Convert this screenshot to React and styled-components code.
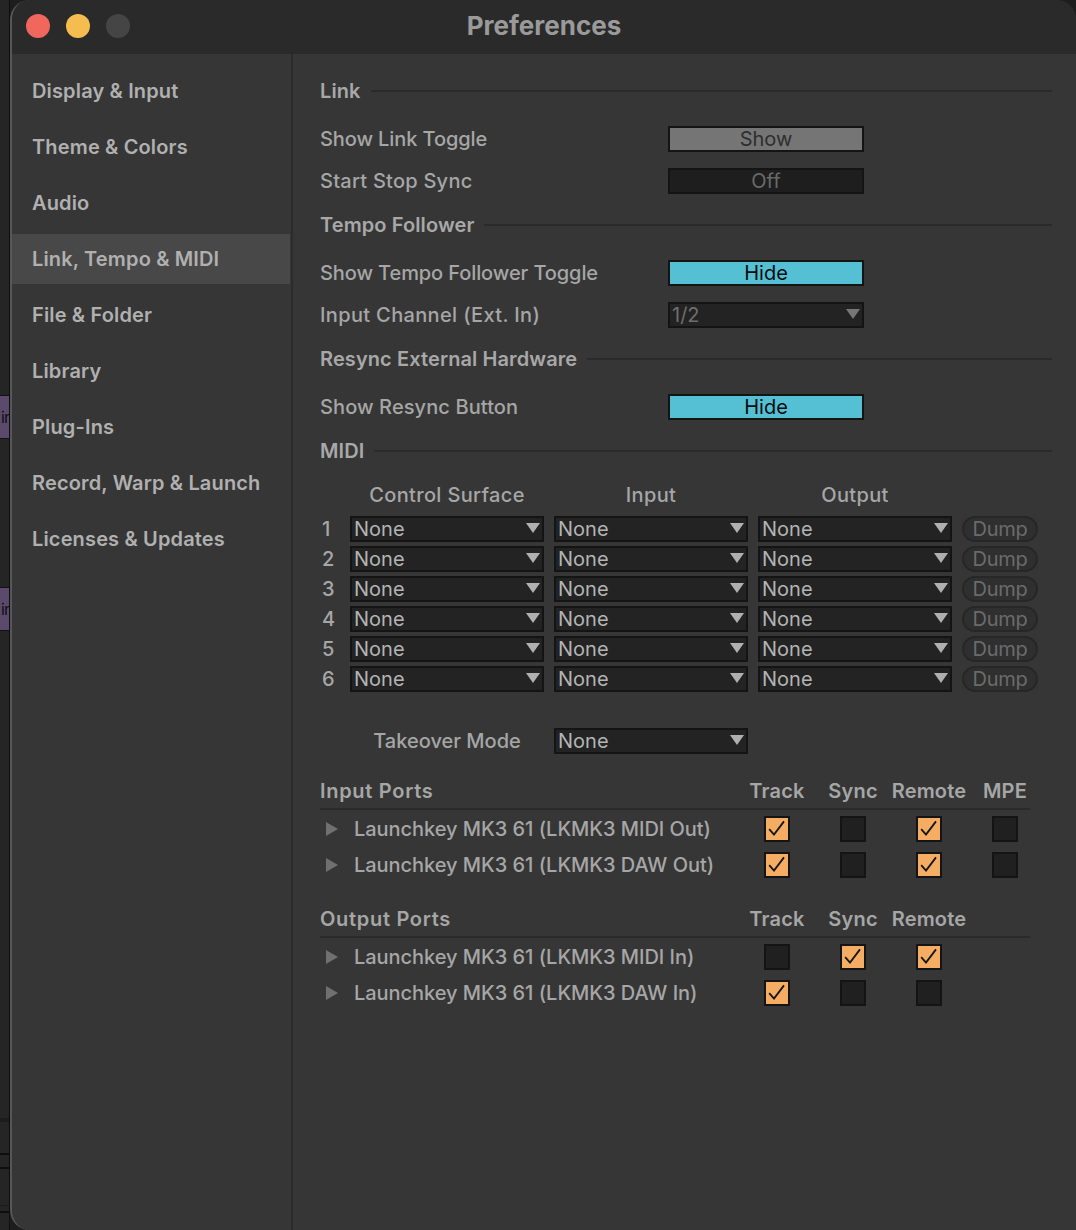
import React from 'react';
import styled, { createGlobalStyle } from 'styled-components';

const GlobalStyle = createGlobalStyle`
  html, body {
    margin: 0;
    height: 100%;
    background: #202020;
  }
  body {
    font-family: Inter, "Noto Sans", "Liberation Sans", sans-serif;
  }
`;

const Screen = styled.div`
  display: flex;
  width: 1076px;
  height: 1230px;
  overflow: hidden;
  background: #1e1e1e;
`;

const BehindStrip = styled.div`
  flex: 0 0 10px;
  height: 100%;
  box-sizing: border-box;
  display: flex;
  flex-direction: column;
  background: #252525;
  border-right: 1px solid #0e0e0e;
`;

const Clip = styled.div`
  flex: 0 0 42px;
  margin-top: ${(p) => p.$top}px;
  background: #5b4a6e;
  border-top: 1px solid #111;
  border-bottom: 1px solid #111;
  color: #111;
  font-size: 16px;
  letter-spacing: -1px;
  line-height: 42px;
  padding-left: 1px;
  overflow: hidden;
`;

const StripLine = styled.div`
  flex: 0 0 ${(p) => p.$h}px;
  margin-top: ${(p) => p.$top}px;
  background: ${(p) => p.$color};
`;

const Window = styled.div`
  flex: 1;
  display: flex;
  flex-direction: column;
  height: 100%;
  box-sizing: border-box;
  border-left: 2px solid #575757;
  border-radius: 20px 20px 0 20px;
  overflow: hidden;
  background: #363636;
`;

const TitleBar = styled.div`
  position: relative;
  flex: 0 0 54px;
  display: flex;
  align-items: center;
  justify-content: center;
  background: #2a2a2a;
`;

const Lights = styled.div`
  position: absolute;
  left: 14px;
  top: 14px;
  display: flex;
  gap: 16px;
`;

const Light = styled.span`
  width: 24px;
  height: 24px;
  border-radius: 50%;
  background: ${(p) => p.$color};
`;

const Title = styled.div`
  color: #9a9a9a;
  font-size: 26px;
  font-weight: 700;
  margin-top: -4px;
`;

const Body = styled.div`
  flex: 1;
  display: flex;
  min-height: 0;
`;

const Sidebar = styled.nav`
  flex: 0 0 278px;
  display: flex;
  flex-direction: column;
  gap: 6px;
  padding-top: 12px;
  box-sizing: border-box;
`;

const NavItem = styled.div`
  height: 50px;
  display: flex;
  align-items: center;
  padding-left: 20px;
  font-size: 20px;
  font-weight: 600;
  letter-spacing: 0.15px;
  color: #b0b0b0;
  background: ${(p) => (p.$active ? '#484848' : 'transparent')};
`;

const Content = styled.main`
  flex: 1;
  border-left: 2px solid #2c2c2c;
  margin-left: 1px;
  padding: 0 24px 0 27px;
  box-sizing: border-box;
`;

const SectionHead = styled.div`
  display: flex;
  align-items: center;
  gap: 10px;
  height: ${(p) => p.$h || 46}px;
  margin-top: ${(p) => p.$top || 0}px;
  font-size: 20px;
  font-weight: 600;
  letter-spacing: 0.1px;
  color: #a8a8a8;
  &::after {
    content: '';
    flex: 1;
    height: 2px;
    background: #2a2a2a;
  }
`;

const SettingRow = styled.div`
  display: grid;
  grid-template-columns: 348px 196px;
  align-items: center;
  height: 42px;
  margin-top: ${(p) => p.$top || 0}px;
  font-size: 20px;
  letter-spacing: ${(p) => p.$track || 0}px;
  color: #a6a6a6;
  font-weight: 500;
`;

const Toggle = styled.div`
  height: 26px;
  box-sizing: border-box;
  border: 2px solid #141414;
  display: flex;
  align-items: center;
  justify-content: center;
  font-size: 20px;
  font-weight: 400;
  letter-spacing: 0;
  background: ${(p) => p.$bg};
  color: ${(p) => p.$fg};
`;

const Select = styled.div`
  height: 26px;
  box-sizing: border-box;
  border: 2px solid #141414;
  background: #232323;
  color: ${(p) => (p.$dim ? '#6e6e6e' : '#b4b4b4')};
  display: flex;
  align-items: center;
  justify-content: space-between;
  padding: 0 2px;
  font-size: 20px;
  font-weight: 400;
  letter-spacing: 0;
`;

const Caret = styled.span`
  width: 0;
  height: 0;
  border-left: 7px solid transparent;
  border-right: 7px solid transparent;
  border-top: 10px solid ${(p) => (p.$dim ? '#777' : '#b0b0b0')};
  margin-top: -2px;
`;

const MidiGrid = styled.div`
  display: grid;
  grid-template-columns: 20px 194px 194px 194px 76px;
  column-gap: 10px;
  align-items: center;
  font-size: 20px;
  color: #a6a6a6;
  font-weight: 500;
`;

const MidiHeader = styled(MidiGrid)`
  height: 38px;
  margin-top: 2px;
`;

const ColumnTitle = styled.span`
  text-align: center;
  letter-spacing: 0.35px;
`;

const MidiRow = styled(MidiGrid)`
  height: 30px;
`;

const RowNum = styled.span`
  padding-left: 2px;
`;

const Dump = styled.div`
  height: 26px;
  box-sizing: border-box;
  border: 2px solid #272727;
  border-radius: 13px;
  background: #2f2f2f;
  color: #6b6b6b;
  display: flex;
  align-items: center;
  justify-content: center;
  font-size: 20px;
  font-weight: 400;
  letter-spacing: -0.3px;
`;

const Takeover = styled(MidiGrid)`
  height: 30px;
  margin-top: 32px;
`;

const TakeoverLabel = styled.span`
  grid-column: 2;
  text-align: center;
`;

const PortGrid = styled.div`
  display: grid;
  grid-template-columns: 419px repeat(4, 76px);
  align-items: center;
  justify-items: center;
  font-size: 20px;
  color: #a6a6a6;
`;

const PortHeader = styled(PortGrid)`
  width: 710px;
  height: 36px;
  margin-top: ${(p) => p.$top}px;
  margin-bottom: 1px;
  border-bottom: 2px solid #2a2a2a;
  box-sizing: border-box;
  font-weight: 600;
  letter-spacing: 0.2px;
`;

const PortTitle = styled.span`
  justify-self: start;
  letter-spacing: 0.7px;
`;

const PortRow = styled(PortGrid)`
  height: 36px;
  font-weight: 500;
  letter-spacing: -0.04px;
`;

const PortName = styled.div`
  justify-self: start;
  display: flex;
  align-items: center;
  gap: 16px;
  padding-left: 6px;
`;

const Disclosure = styled.span`
  width: 0;
  height: 0;
  border-top: 7px solid transparent;
  border-bottom: 7px solid transparent;
  border-left: 12px solid #707070;
`;

const Check = styled.div`
  width: 26px;
  height: 26px;
  box-sizing: border-box;
  border: 2px solid #141414;
  background: ${(p) => (p.$on ? '#f4ad63' : '#202020')};
`;

const CheckMark = styled.svg`
  display: block;
  width: 22px;
  height: 22px;
`;

const ports = {
  input: [
    { name: 'Launchkey MK3 61 (LKMK3 MIDI Out)', flags: [1, 0, 1, 0] },
    { name: 'Launchkey MK3 61 (LKMK3 DAW Out)', flags: [1, 0, 1, 0] }
  ],
  output: [
    { name: 'Launchkey MK3 61 (LKMK3 MIDI In)', flags: [0, 1, 1] },
    { name: 'Launchkey MK3 61 (LKMK3 DAW In)', flags: [1, 0, 0] }
  ]
};

const nav = [
  'Display & Input',
  'Theme & Colors',
  'Audio',
  'Link, Tempo & MIDI',
  'File & Folder',
  'Library',
  'Plug-Ins',
  'Record, Warp & Launch',
  'Licenses & Updates'
];

function CheckBox({ on }) {
  return (
    <Check $on={on}>
      {on && (
        <CheckMark viewBox="0 0 22 22">
          <path d="M3.2 11.2 L8 16.6 L18 3.4" fill="none" stroke="#141414" strokeWidth="1.8" />
        </CheckMark>
      )}
    </Check>
  );
}

function Dropdown({ value, dim }) {
  return (
    <Select $dim={dim}>
      {value}
      <Caret $dim={dim} />
    </Select>
  );
}

function PortTable({ title, columns, rows, top }) {
  return (
    <>
      <PortHeader $top={top}>
        <PortTitle>{title}</PortTitle>
        {columns.map((c) => (
          <span key={c}>{c}</span>
        ))}
      </PortHeader>
      {rows.map((r) => (
        <PortRow key={r.name}>
          <PortName>
            <Disclosure />
            {r.name}
          </PortName>
          {r.flags.map((f, i) => (
            <CheckBox key={i} on={!!f} />
          ))}
        </PortRow>
      ))}
    </>
  );
}

export default function App() {
  return (
    <Screen>
      <GlobalStyle />
      <BehindStrip>
        <Clip $top={395}>ir</Clip>
        <Clip $top={148}>ir</Clip>
        <StripLine $top={487} $h={4} $color="#1c1c1c" />
        <StripLine $top={31} $h={2} $color="#0e0e0e" />
        <StripLine $top={12} $h={2} $color="#0e0e0e" />
        <StripLine $top={36} $h={1} $color="#1b1b1b" />
        <StripLine $top={5} $h={2} $color="#0e0e0e" />
      </BehindStrip>
      <Window>
        <TitleBar>
          <Lights>
            <Light $color="#f2675d" />
            <Light $color="#f5bd4f" />
            <Light $color="#454545" />
          </Lights>
          <Title>Preferences</Title>
        </TitleBar>
        <Body>
          <Sidebar>
            {nav.map((n) => (
              <NavItem key={n} $active={n === 'Link, Tempo & MIDI'}>
                {n}
              </NavItem>
            ))}
          </Sidebar>
          <Content>
            <SectionHead $h={44} $top={15}>Link</SectionHead>
            <SettingRow $top={5} $track={-0.1}>
              Show Link Toggle
              <Toggle $bg="#757575" $fg="#2e2e2e">Show</Toggle>
            </SettingRow>
            <SettingRow $track={0.25}>
              Start Stop Sync
              <Toggle $bg="#1e1e1e" $fg="#6a6a6a">Off</Toggle>
            </SettingRow>
            <SectionHead>Tempo Follower</SectionHead>
            <SettingRow $top={4} $track={-0.1}>
              Show Tempo Follower Toggle
              <Toggle $bg="#55bfd4" $fg="#0c0c0c">Hide</Toggle>
            </SettingRow>
            <SettingRow $track={0.35}>
              Input Channel (Ext. In)
              <Dropdown value="1/2" dim />
            </SettingRow>
            <SectionHead>Resync External Hardware</SectionHead>
            <SettingRow $top={4} $track={0.1}>
              Show Resync Button
              <Toggle $bg="#55bfd4" $fg="#0c0c0c">Hide</Toggle>
            </SettingRow>
            <SectionHead>MIDI</SectionHead>
            <MidiHeader>
              <i />
              <ColumnTitle>Control Surface</ColumnTitle>
              <ColumnTitle>Input</ColumnTitle>
              <ColumnTitle>Output</ColumnTitle>
            </MidiHeader>
            {[1, 2, 3, 4, 5, 6].map((n) => (
              <MidiRow key={n}>
                <RowNum>{n}</RowNum>
                <Dropdown value="None" />
                <Dropdown value="None" />
                <Dropdown value="None" />
                <Dump>Dump</Dump>
              </MidiRow>
            ))}
            <Takeover>
              <TakeoverLabel>Takeover Mode</TakeoverLabel>
              <Dropdown value="None" />
            </Takeover>
            <PortTable
              title="Input Ports"
              columns={['Track', 'Sync', 'Remote', 'MPE']}
              rows={ports.input}
              top={18}
            />
            <PortTable
              title="Output Ports"
              columns={['Track', 'Sync', 'Remote']}
              rows={ports.output}
              top={19}
            />
          </Content>
        </Body>
      </Window>
    </Screen>
  );
}
